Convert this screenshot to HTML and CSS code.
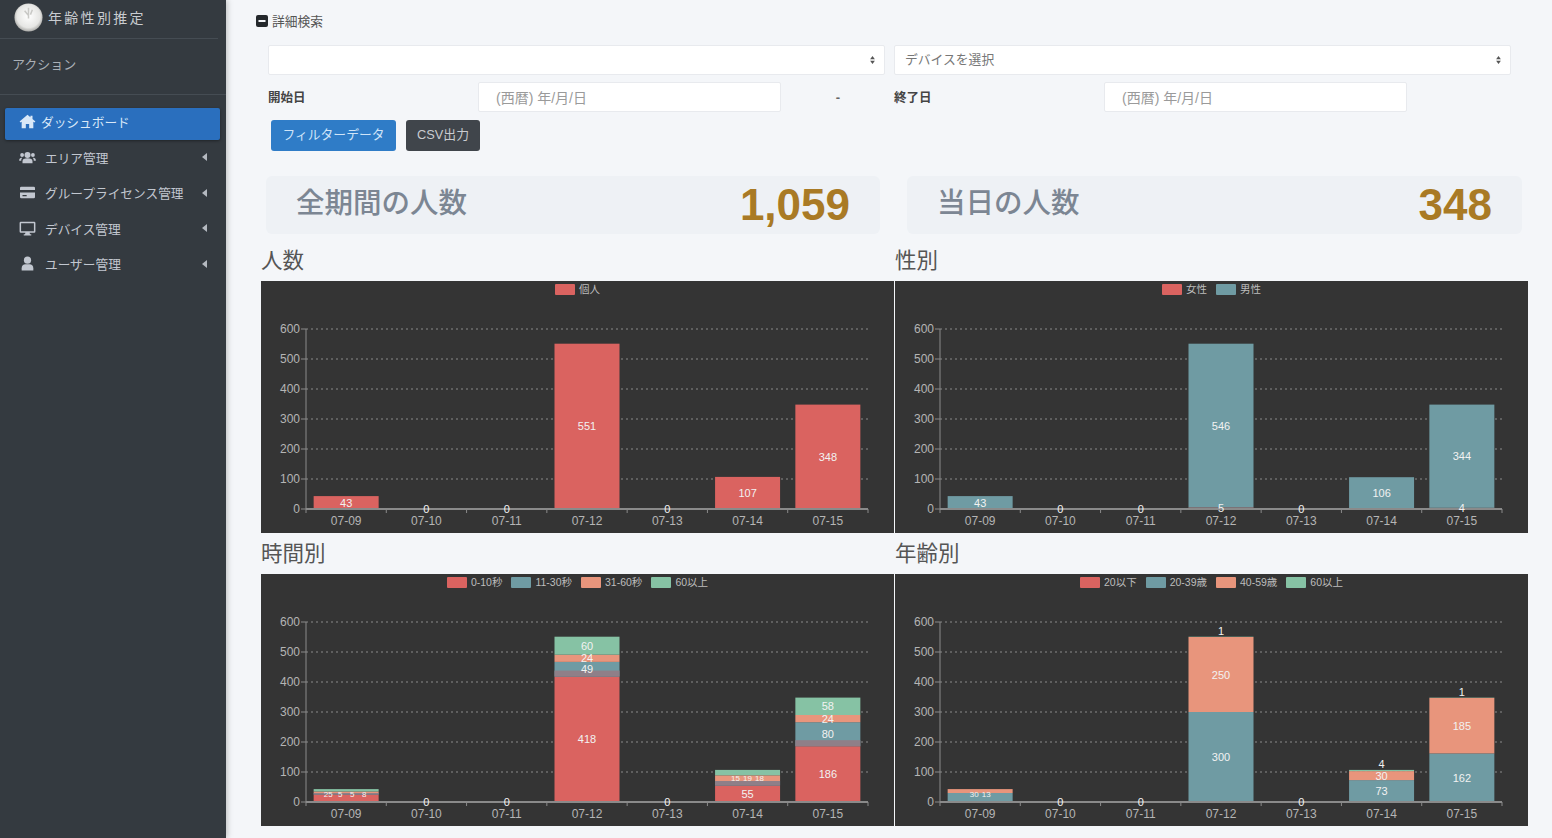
FILE: index.html
```html
<!DOCTYPE html>
<html lang="ja">
<head>
    <meta charset="UTF-8">
    <meta name="viewport" content="width=device-width, initial-scale=1.0">
    <title>年齢性別推定</title>
    <link rel="stylesheet" href="styles.css">
</head>
<body>
    <aside class="sidebar">
        <div class="brand">
            <svg class="brand-logo" viewBox="0 0 30 30">
                <defs>
                    <radialGradient id="logoFill" cx="50%" cy="45%" r="55%">
                        <stop offset="0%" stop-color="#ffffff"/>
                        <stop offset="75%" stop-color="#e6e6e4"/>
                        <stop offset="100%" stop-color="#a9a9a6"/>
                    </radialGradient>
                </defs>
                <circle cx="15" cy="15" r="14.5" fill="url(#logoFill)"/>
                <path d="M15 5v11M11 8l4 5M19 7l-2 5" stroke="#c9c9c6" stroke-width="1.6" fill="none"/>
            </svg>
            <span class="brand-name">年齢性別推定</span>
        </div>
        <div class="action-title">アクション</div>
        <ul class="nav">
            <li class="nav-item active">
                <svg class="nav-icon" viewBox="0 0 20 18"><path d="M10 1 0.5 9l1.2 1.3L3 9.2V17h5v-5h4v5h5V9.2l1.3 1.1L19.500 9 16 6V2h-2.500v1.900z"/></svg>
                <span>ダッシュボード</span>
            </li>
            <li class="nav-item">
                <svg class="nav-icon" viewBox="0 0 20 18"><circle cx="10" cy="6" r="3.600"/><circle cx="3.500" cy="6" r="2.300"/><circle cx="16.500" cy="6" r="2.300"/><path d="M4 16v-2.500C4 11 6 10 10 10s6 1 6 3.500V16zM0 12.500C0 10 1.500 9 3.800 9.300 2.800 10.300 2.500 11.300 2.500 13H0zM20 12.500C20 10 18.500 9 16.200 9.300c1 1 1.300 2 1.300 3.700H20z"/></svg>
                <span>エリア管理</span>
                <i class="nav-arrow"></i>
            </li>
            <li class="nav-item">
                <svg class="nav-icon" viewBox="0 0 20 18"><path d="M2.500 2h15A1.500 1.500 0 0 1 19 3.500V6H1V3.500A1.500 1.500 0 0 1 2.500 2zM1 9h18v5.500a1.500 1.500 0 0 1-1.500 1.500h-15A1.500 1.500 0 0 1 1 14.500zm3 3v1.500h5V12z"/></svg>
                <span>グループライセンス管理</span>
                <i class="nav-arrow"></i>
            </li>
            <li class="nav-item">
                <svg class="nav-icon" viewBox="0 0 20 18"><path fill-rule="evenodd" d="M2 1h16a1.500 1.500 0 0 1 1.500 1.500v10A1.500 1.500 0 0 1 18 14h-5.500l.5 2h1.500v1.300h-9V16H7l.5-2H2a1.500 1.500 0 0 1-1.500-1.500v-10A1.500 1.500 0 0 1 2 1zm.3 1.800v9.400h15.400V2.800z"/></svg>
                <span>デバイス管理</span>
                <i class="nav-arrow"></i>
            </li>
            <li class="nav-item">
                <svg class="nav-icon" viewBox="0 0 20 18"><circle cx="10" cy="5" r="4.300"/><path d="M3 17.500v-2.800C3 11.800 5 10 7.500 10h5c2.500 0 4.500 1.800 4.500 4.700v2.800z"/></svg>
                <span>ユーザー管理</span>
                <i class="nav-arrow"></i>
            </li>
        </ul>
    </aside>

    <main class="content">
        <div class="search-title">
            <svg class="minus-icon" viewBox="0 0 12 12"><rect width="12" height="12" rx="2"/><rect x="2.500" y="5" width="7" height="2" fill="#f4f6f9"/></svg>
            <span>詳細検索</span>
        </div>

        <form class="filters">
            <div class="select-wrap">
                <select class="select"><option></option></select>
                <svg class="select-arrows" viewBox="0 0 6 10"><path d="M3 0 6 4H0zM3 10 0 6h6z"/></svg>
            </div>
            <div class="select-wrap">
                <select class="select"><option>デバイスを選択</option></select>
                <svg class="select-arrows" viewBox="0 0 6 10"><path d="M3 0 6 4H0zM3 10 0 6h6z"/></svg>
            </div>
            <div class="date-field">
                <label>開始日</label>
                <input type="text" placeholder="(西暦) 年/月/日">
                <span class="date-sep">-</span>
            </div>
            <div class="date-field">
                <label>終了日</label>
                <input type="text" placeholder="(西暦) 年/月/日">
            </div>
        </form>

        <div class="actions">
            <button class="btn btn-primary">フィルターデータ</button>
            <button class="btn btn-dark">CSV出力</button>
        </div>

        <div class="stats">
            <div class="stat">
                <span class="stat-title">全期間の人数</span>
                <span class="stat-value">1,059</span>
            </div>
            <div class="stat">
                <span class="stat-title">当日の人数</span>
                <span class="stat-value">348</span>
            </div>
        </div>

        <div class="charts">
            <section>
                <h2>人数</h2>
                <div class="chart" id="chartTotal"></div>
            </section>
            <section>
                <h2>性別</h2>
                <div class="chart" id="chartGender"></div>
            </section>
            <section>
                <h2>時間別</h2>
                <div class="chart" id="chartTime"></div>
            </section>
            <section>
                <h2>年齢別</h2>
                <div class="chart" id="chartAge"></div>
            </section>
        </div>
    </main>

    <script src="charts.js"></script>
</body>
</html>
```

FILE: styles.css
```css
* {
    box-sizing: border-box;
}
body {
    font-family: "Liberation Sans", "Noto Sans CJK JP", sans-serif;
    background-color: #f4f6f9;
    margin: 0;
    height: 838px;
    overflow: hidden;
    display: flex;
}

/* sidebar */
.sidebar {
    width: 226px;
    flex-shrink: 0;
    background-color: #343a40;
    box-shadow: 1px 0 6px rgba(0,0,0,0.25);
    color: #c2c7d0;
}
.brand {
    display: flex;
    align-items: center;
    gap: 5px;
    height: 39px;
    margin: 0 8px 0 0;
    padding: 2px 0 6px 14px;
    border-bottom: 1px solid #454c53;
}
.brand-logo {
    width: 29px;
    height: 29px;
}
.brand-name {
    font-size: 14px;
    letter-spacing: 2.3px;
    color: #c9ccd0;
}
.action-title {
    height: 56px;
    padding: 15px 0 0 12px;
    font-size: 13px;
    color: #aab0b7;
    border-bottom: 1px solid #454c53;
}
.nav {
    list-style: none;
    margin: 13px 0 0 5px;
    padding: 0;
    width: 215px;
    display: flex;
    flex-direction: column;
    gap: 3.4px;
}
.nav-item {
    display: flex;
    align-items: center;
    height: 32px;
    padding: 0 14px 4px;
    font-size: 12.7px;
    border-radius: 2px;
}
.nav-item span {
    margin-left: 9px;
}
.nav-item.active {
    background-color: #2a6fbe;
    color: #d9e8f8;
    padding-bottom: 5px;
    box-shadow: 0 1px 3px rgba(0,0,0,0.4);
}
.nav-item.active span {
    margin-left: 5px;
}
.nav-icon {
    width: 17px;
    height: 15px;
    fill: #c2c7d0;
    flex-shrink: 0;
}
.nav-item.active .nav-icon {
    fill: #d9e8f8;
}
.nav-arrow {
    margin-left: auto;
    margin-right: -1px;
    border-top: 4px solid transparent;
    border-bottom: 4px solid transparent;
    border-right: 5px solid #b4b9c0;
}

/* filters */
.content {
    flex: 1;
    padding: 14px 24px 0 35px;
}
.search-title {
    display: flex;
    align-items: center;
    gap: 4px;
    height: 13px;
    margin-left: -5px;
    font-size: 12.75px;
    color: #555;
}
.minus-icon {
    width: 12px;
    height: 12px;
    fill: #24282c;
}
.filters {
    display: grid;
    grid-template-columns: 617px 617px;
    column-gap: 9px;
    row-gap: 7px;
    margin: 18px 0 0 7px;
}
.select-wrap {
    position: relative;
}
.select {
    display: block;
    width: 100%;
    height: 30px;
    padding: 0 10px 2px;
    appearance: none;
    background: white;
    border: 1px solid #e8eaee;
    border-radius: 2px;
    font-family: inherit;
    font-size: 12.8px;
    color: #777;
}
.select-arrows {
    position: absolute;
    right: 10px;
    top: 11px;
    width: 5px;
    height: 8px;
    fill: #555;
}
.date-field {
    display: grid;
    grid-template-columns: 210px 303px 1fr;
    align-items: center;
}
.date-field label {
    font-size: 12.5px;
    font-weight: bold;
    color: #444;
    padding-bottom: 2px;
}
.date-field input {
    height: 30px;
    padding: 2px 17px 0;
    background: white;
    border: 1px solid #e8eaee;
    border-radius: 2px;
    font-family: inherit;
    font-size: 14px;
}
.date-field input::placeholder {
    color: #9a9a9a;
}
.date-sep {
    padding-left: 10px;
    text-align: center;
    font-size: 13px;
    font-weight: bold;
    color: #666;
}
.actions {
    display: flex;
    gap: 10px;
    margin: 8px 0 0 10px;
}
.btn {
    height: 31px;
    padding: 0 0 4px;
    border: none;
    border-radius: 3px;
    font-family: inherit;
    font-size: 12.8px;
}
.btn-primary {
    width: 125px;
    background-color: #2f7cc7;
    color: #cfe4f8;
}
.btn-dark {
    width: 74px;
    background-color: #40454b;
    color: #c9ccd0;
}

/* totals */
.stats {
    display: grid;
    grid-template-columns: 614px 615px;
    column-gap: 27px;
    margin: 25px 0 0 5px;
}
.stat {
    height: 58px;
    display: flex;
    align-items: center;
    justify-content: space-between;
    padding: 0 30px;
    background-color: #eef1f5;
    border-radius: 6px;
}
.stat-title {
    font-size: 28.5px;
    font-weight: 500;
    color: #7c8693;
    padding-bottom: 10px;
}
.stat-value {
    font-size: 44px;
    font-weight: bold;
    color: #a97a25;
}

/* charts */
.charts {
    display: grid;
    grid-template-columns: 633px 633px;
    column-gap: 1px;
    row-gap: 6px;
    margin-top: 12px;
}
.charts h2 {
    margin: 0 0 7px;
    height: 28px;
    line-height: 30px;
    font-size: 21.5px;
    font-weight: 400;
    color: #555;
}
.chart {
    height: 252px;
    background-color: #343434;
}
.chart svg {
    display: block;
}
.chart-legend {
    display: flex;
    justify-content: center;
    gap: 9px;
    height: 20px;
    padding-top: 3px;
    font-size: 10.5px;
    line-height: 11px;
    color: #bdbdbd;
}
.legend-item {
    display: flex;
    gap: 4px;
}
.legend-swatch {
    width: 20px;
    height: 11px;
    border-radius: 1px;
}
.axis-label {
    font-size: 12px;
    fill: #b5b5b5;
}
.bar-label {
    font-size: 11px;
    fill: #f2f2f2;
    text-anchor: middle;
}
.bar-label-small {
    font-size: 8px;
}
```

FILE: charts.js
```js
const RED = '#da6360';
const TEAL = '#6f9ba3';
const SALMON = '#e8957c';
const MINT = '#86c2a4';

const DAYS = ['07-09', '07-10', '07-11', '07-12', '07-13', '07-14', '07-15'];

const CHARTS = {
    chartTotal: [
        { name: '個人', color: RED, values: [43, 0, 0, 551, 0, 107, 348] }
    ],
    chartGender: [
        { name: '女性', color: RED, values: [0, 0, 0, 5, 0, 0, 4] },
        { name: '男性', color: TEAL, values: [43, 0, 0, 546, 0, 106, 344] }
    ],
    chartTime: [
        { name: '0-10秒', color: RED, values: [25, 0, 0, 418, 0, 55, 186] },
        { name: '11-30秒', color: TEAL, under: '#8f7f88', values: [5, 0, 0, 49, 0, 15, 80] },
        { name: '31-60秒', color: SALMON, values: [5, 0, 0, 24, 0, 19, 24] },
        { name: '60以上', color: MINT, values: [8, 0, 0, 60, 0, 18, 58] }
    ],
    chartAge: [
        { name: '20以下', color: RED, values: [0, 0, 0, 0, 0, 0, 0] },
        { name: '20-39歳', color: TEAL, values: [30, 0, 0, 300, 0, 73, 162] },
        { name: '40-59歳', color: SALMON, values: [13, 0, 0, 250, 0, 30, 185] },
        { name: '60以上', color: MINT, values: [0, 0, 0, 1, 0, 4, 1] }
    ]
};

// plot area inside the 633x232 svg
const LEFT = 45;
const RIGHT = 607;
const TOP = 28;
const BOTTOM = 208;
const PER_UNIT = (BOTTOM - TOP) / 600;
const BAR_WIDTH = 65;

function barLabel(x, y, text, small) {
    const cls = small ? 'bar-label bar-label-small' : 'bar-label';
    return '<text class="' + cls + '" x="' + x + '" y="' + y + '">' + text + '</text>';
}

function drawLegend(series) {
    const items = series.map(s =>
        '<div class="legend-item"><div class="legend-swatch" style="background-color:' + s.color + '"></div>' + s.name + '</div>'
    );
    return '<div class="chart-legend">' + items.join('') + '</div>';
}

function drawAxes() {
    let out = '';
    for (let v = 0; v <= 600; v += 100) {
        const y = BOTTOM - v * PER_UNIT;
        if (v > 0) {
            out += '<line x1="' + LEFT + '" x2="' + RIGHT + '" y1="' + y + '" y2="' + y + '" stroke="#8a8a8a" stroke-dasharray="2 3"/>';
        }
        out += '<line x1="' + (LEFT - 5) + '" x2="' + LEFT + '" y1="' + y + '" y2="' + y + '" stroke="#8a8a8a"/>';
        out += '<text class="axis-label" x="39" y="' + (y + 4) + '" text-anchor="end">' + v + '</text>';
    }
    out += '<line x1="' + LEFT + '" x2="' + LEFT + '" y1="' + TOP + '" y2="' + BOTTOM + '" stroke="#8a8a8a"/>';
    return out;
}

// thin segments can't hold their number, so they share one row of small ones
function drawSegmentLabels(center, segments) {
    let out = '';
    const last = segments[segments.length - 1];
    if (last && last.h < 2 && segments.length > 1) {
        out += barLabel(center, last.top - 2, last.value);
        segments = segments.slice(0, -1);
    }

    const thin = segments.filter(s => s.h < 10);
    segments.forEach(s => {
        if (thin.length < 2 || s.h >= 10) {
            out += barLabel(center, s.top + s.h / 2 + 4, s.value);
        }
    });
    if (thin.length > 1) {
        const mid = thin.reduce((sum, s) => sum + s.top + s.h / 2, 0) / thin.length;
        thin.forEach((s, j) => {
            out += barLabel(center + (j - (thin.length - 1) / 2) * 12, mid + 3, s.value, true);
        });
    }
    return out;
}

function drawBars(series) {
    const step = (RIGHT - LEFT) / DAYS.length;
    let out = '';
    let labels = '';

    DAYS.forEach((day, i) => {
        const center = LEFT + step * (i + 0.5);
        const x = center - BAR_WIDTH / 2;
        const segments = [];
        let base = BOTTOM;

        series.forEach(s => {
            const value = s.values[i];
            if (!value) return;
            const h = value * PER_UNIT;
            out += '<rect x="' + x + '" y="' + (base - h) + '" width="' + BAR_WIDTH + '" height="' + h + '" fill="' + s.color + '"/>';
            if (s.under) {
                const uh = Math.min(6, h);
                out += '<rect x="' + x + '" y="' + (base - uh) + '" width="' + BAR_WIDTH + '" height="' + uh + '" fill="' + s.under + '"/>';
            }
            segments.push({ value: value, h: h, top: base - h });
            base -= h;
        });

        labels += segments.length ? drawSegmentLabels(center, segments) : barLabel(center, BOTTOM + 4, 0);
        labels += '<text class="axis-label" x="' + center + '" y="224" text-anchor="middle">' + day + '</text>';
    });

    // x axis goes over the bars, with a tick between every two days
    let axis = '<line x1="' + LEFT + '" x2="' + RIGHT + '" y1="' + BOTTOM + '" y2="' + BOTTOM + '" stroke="#8a8a8a" stroke-width="2"/>';
    for (let i = 0; i <= DAYS.length; i++) {
        const x = LEFT + step * i;
        axis += '<line x1="' + x + '" x2="' + x + '" y1="' + BOTTOM + '" y2="' + (BOTTOM + 4) + '" stroke="#8a8a8a"/>';
    }
    return out + axis + labels;
}

Object.keys(CHARTS).forEach(id => {
    const series = CHARTS[id];
    document.getElementById(id).innerHTML = drawLegend(series) +
        '<svg width="633" height="232" viewBox="0 0 633 232">' + drawAxes() + drawBars(series) + '</svg>';
});
```
